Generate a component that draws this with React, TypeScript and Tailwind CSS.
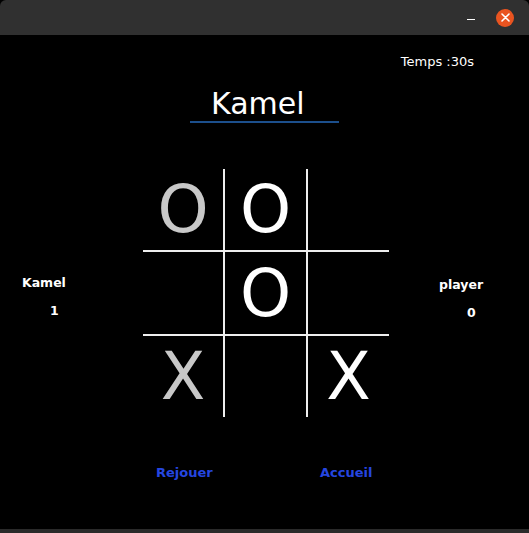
import React from 'react'

type Mark = { v: 'O' | 'X'; dim?: boolean } | null

const board: Mark[] = [
  { v: 'O', dim: true }, { v: 'O' }, null,
  null, { v: 'O' }, null,
  { v: 'X', dim: true }, null, { v: 'X' },
]

const font = { fontFamily: '"DejaVu Sans", Verdana, sans-serif' }

function Score({ name, score }: { name: string; score: number }) {
  return (
    <div className="flex flex-col items-start text-white font-bold text-[12.5px] leading-[14px]">
      <span>{name}</span>
      <span className="mt-[14px] ml-[28px]">{score}</span>
    </div>
  )
}

export default function App() {
  return (
    <div className="w-[529px] h-[533px] flex flex-col bg-black overflow-hidden" style={font}>
      {/* Title bar */}
      <div className="h-[35px] shrink-0 bg-[#303030] rounded-t-[6px] flex items-center justify-end">
        <div className="w-[8px] h-[1.5px] bg-white mr-[21px] mt-[4px]" />
        <div className="w-[18px] h-[18px] rounded-full bg-[#e95420] flex items-center justify-center mr-[15px]">
          <svg width="9" height="9" viewBox="0 0 9 9">
            <path d="M1 1 L8 8 M8 1 L1 8" stroke="white" strokeWidth="1.6" strokeLinecap="round" />
          </svg>
        </div>
      </div>

      {/* Content */}
      <div className="flex-1 flex flex-col pt-[19px]">
        <div className="flex justify-end pr-[55px] text-[13px] leading-[15px] text-white">
          Temps :30s
        </div>

        <div className="flex mt-[18px] pl-[190px]">
          <div className="w-[149px] border-b-2 border-[#1c4f8c] pl-[21px] text-white text-[30px] leading-[34px]">
            Kamel
          </div>
        </div>

        <div className="flex mt-[46px] pl-[22px]">
          <div className="w-[121px] pt-[107px]">
            <Score name="Kamel" score={1} />
          </div>
          <div className="grid grid-cols-[80px_81px_81px] grid-rows-[81px_82px_81px] gap-[2px] bg-[#eeeeee]">
            {board.map((m, i) => (
              <div
                key={i}
                className={`bg-black flex items-center justify-center text-[65px] leading-none ${
                  m?.dim ? 'text-[#c8c8c8]' : 'text-white'
                }`}
              >
                {m?.v}
              </div>
            ))}
          </div>
          <div className="ml-[50px] pt-[109px]">
            <Score name="player" score={0} />
          </div>
        </div>

        <div className="flex mt-[48px] pl-[156px] text-[13px] leading-[15px] font-bold text-[#2546e0]">
          <button className="w-[164px] text-left">Rejouer</button>
          <button>Accueil</button>
        </div>
      </div>

      <div className="h-[4px] shrink-0 bg-[#2a2a2a]" />
    </div>
  )
}
